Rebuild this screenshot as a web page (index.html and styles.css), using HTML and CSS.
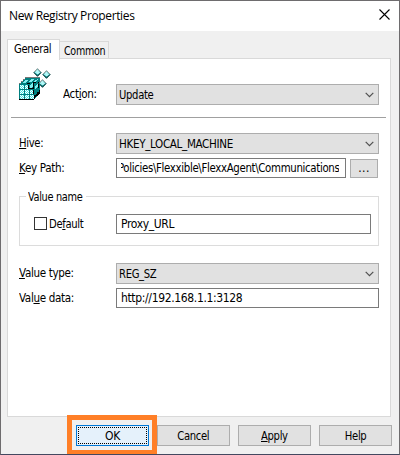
FILE: index.html
```
<!DOCTYPE html>
<html lang="en">
<head>
<meta charset="utf-8">
<title>New Registry Properties</title>
<link rel="stylesheet" href="styles.css">
</head>
<body>
<div class="window">
  <header class="titlebar">
    <span class="title">New Registry Properties</span>
    <svg class="close" width="11" height="11" viewBox="0 0 11 11"><path d="M.5 .5l10 10M10.5 .5l-10 10"/></svg>
  </header>
  <nav class="tabs">
    <div class="tab active"><span class="t narrow">General</span></div>
    <div class="tab"><span class="t narrowest">Common</span></div>
  </nav>
  <main class="panel">
    <div class="row action">
      <svg class="icon" width="34" height="34" viewBox="0 0 34 34">
        <defs>
          <pattern id="d" width="2" height="2" patternUnits="userSpaceOnUse"><path fill="#48e6e6" d="M0 0h2v2H0z"/><path fill="#fff" d="M0 0h1v1H0zM1 1h1v1H1z"/></pattern>
          <g id="gem"><path fill="#008080" d="M0-4L4 0 0 4-4 0z"/><path fill="#9ff4f4" d="M0-3.4L3 0 0 2-3 0z"/><path fill="#fff" d="M-1-2h1v1h-1zM0 0h1v1H0z"/><path fill="none" stroke="#999" d="M-3.6 0L0-3.8 3.6 0"/><path fill="none" stroke="#1c3c3c" d="M-3.6 0L0 3.8 3.6 0"/></g>
        </defs>
        <g shape-rendering="crispEdges">
        <path fill="#008080" d="M1 17L7 11H22V26L16 33H1z"/>
        <path fill="url(#d)" d="M2 18h4v4H2zM2 23h4v4H2zM7 23h4v4H7zM2 28h4v4H2zM7 28h4v4H7zM12 28h4v4h-4zM7 18h3v4H7zM12 23h3v4h-3z"/>
        <path fill="#7fefef" d="M4 16l3-3h3l-3 3zM11 14l3-2h2l-2 3h-3zM17 13l3-1-2 3h-2zM12 18l3-2v4l-3 1zM17 19l3-3v4l-3 2z"/>
        <path fill="#000" d="M10 18h1v4h-1zM11 21h5v1h-5zM15 23h1v4h-1zM16 28l6-6v4l-6 7H1v-1h15zM15 16h1v5h-1zM20 15h1v6h-1zM9 16h3v1H9zM15 15h3v1h-3z"/>
        <path fill="#008080" d="M17 25l2-2v3l-2 2zM20 22l1-1v3l-1 1zM17 30l2-2v1l-2 2z"/>
        <path fill="#777" d="M7 10h15v1H7zM5 12h2v1H5zM3 14h2v1H3zM1 16h2v1H1z"/>
        </g>
        <use href="#gem" x="19.5" y="5.5"/><use href="#gem" x="28.5" y="7.5"/><use href="#gem" x="24.5" y="16.5"/>
      </svg>
      <label class="label l-action"><span class="t slim">Act<u>i</u>on:</span></label>
      <div class="select"><span class="t narrow">Update</span><svg class="chev" width="9" height="6" viewBox="0 0 9 6"><path d="M.7 .8l3.8 3.8L8.3 .8"/></svg></div>
    </div>
    <div class="rule"></div>
    <div class="row hive">
      <label class="label"><span class="t narrow"><u>H</u>ive:</span></label>
      <div class="select"><span class="t slim">HKEY_LOCAL_MACHINE</span><svg class="chev" width="9" height="6" viewBox="0 0 9 6"><path d="M.7 .8l3.8 3.8L8.3 .8"/></svg></div>
    </div>
    <div class="row path">
      <label class="label"><span class="t slim"><u>K</u>ey Path:</span></label>
      <div class="input"><div class="clip"><span class="t path-text">Policies\Flexxible\FlexxAgent\Communications</span></div></div>
      <div class="browse">...</div>
    </div>
    <section class="group">
      <div class="legend"><span class="t narrower">Value name</span></div>
      <div class="check"></div>
      <label class="default"><span class="t narrow">De<u>f</u>ault</span></label>
      <div class="input"><span>Proxy_URL</span></div>
    </section>
    <div class="row type">
      <label class="label"><span class="t slim"><u>V</u>alue type:</span></label>
      <div class="select"><span class="t narrow">REG_SZ</span><svg class="chev" width="9" height="6" viewBox="0 0 9 6"><path d="M.7 .8l3.8 3.8L8.3 .8"/></svg></div>
    </div>
    <div class="row data">
      <label class="label"><span class="t slim">Val<u>u</u>e data:</span></label>
      <div class="input"><span>http://192.168.1.1:3128</span></div>
    </div>
  </main>
  <footer class="buttons">
    <div class="button ok"><span>OK</span></div>
    <div class="button"><span>Cancel</span></div>
    <div class="button"><span><u>A</u>pply</span></div>
    <div class="button"><span>Help</span></div>
    <div class="highlight"></div>
  </footer>
</div>
</body>
</html>
```
FILE: styles.css
```
* { box-sizing: border-box; }
body { margin: 0; font: 12px/14px "DejaVu Sans Condensed", "DejaVu Sans", sans-serif; font-stretch: condensed; letter-spacing: -0.35px; color: #000; }
u { text-decoration-thickness: 1px; text-underline-offset: 1px; text-decoration-skip-ink: none; }
.t { display: inline-block; transform-origin: 0 50%; }
.slim { transform: scaleX(.962); }
.narrow { transform: scaleX(.93); }
.narrower { transform: scaleX(.905); }
.narrowest { transform: scaleX(.885); }
.window { width: 400px; height: 455px; border: 1px solid #6e6c6e; border-bottom-color: #434860; background: #f0f0f0; overflow: hidden; white-space: nowrap; }
.titlebar { height: 30px; background: #fff; display: flex; justify-content: space-between; padding: 7px 9px 0 8px; }
.title { font: 12px/16px "Open Sans", sans-serif; letter-spacing: -0.37px; }
.close { margin-top: 1px; fill: none; stroke: #000; stroke-width: 1.1; }
.tabs { height: 28px; padding: 7px 0 0 6px; display: flex; align-items: flex-end; position: relative; z-index: 1; }
.tab { width: 49px; height: 18px; border: 1px solid #d9d9d9; border-left: 0; border-bottom: 0; padding: 2px 0 0 4px; }
.tab.active { width: 53px; height: 21px; border-left: 1px solid #d9d9d9; background: #fff; padding: 2px 0 0 6px; margin-bottom: -1px; }
.panel { width: 384px; height: 359px; margin: -1px 0 0 6px; border: 1px solid #d9d9d9; background: #fff; padding: 25px 11px 0; }
.row { display: flex; align-items: flex-start; }
.label { width: 97px; padding-top: 3px; flex: none; }
.select, .input { flex: 1; display: flex; align-items: center; }
.select { height: 21px; border: 1px solid #adadad; background: #e1e1e1; padding: 1px 4px 0 2px; justify-content: space-between; }
.input { height: 20px; border: 1px solid #7a7a7a; background: #fff; padding-left: 4px; }
.chev { fill: none; stroke: #505050; stroke-width: 1.2; }
.icon { margin-top: -17px; margin-left: -1px; flex: none; }
.action { height: 33px; }
.l-action { width: 53px; margin-left: 11px; }
.rule { height: 1px; background: #a0a0a0; margin: 0 -7px 0 -8px; }
.hive { margin-top: 15px; }
.path { margin-top: 4px; }
.path .input { flex: none; width: 230px; }
.clip { overflow: hidden; width: 218px; display: flex; justify-content: flex-end; }
.clip .t { flex: none; transform-origin: 100% 50%; }
.path-text { transform: scaleX(.945); }
.browse { width: 28px; height: 19px; margin: 1px 0 0 4px; border: 1px solid #adadad; background: #e1e1e1; text-align: center; letter-spacing: .4px; line-height: 17px; }
.group { position: relative; height: 50px; margin-top: 18px; border: 1px solid #dcdcdc; display: flex; align-items: flex-start; padding: 17px 7px 0 14px; }
.legend { position: absolute; left: 6px; top: -7px; width: 60px; padding-left: 2px; background: #fff; }
.check { width: 13px; height: 13px; margin-top: 3px; border: 1px solid #333; }
.default { width: 69px; padding: 3px 0 0 2px; }
.type { margin-top: 17px; }
.data { margin-top: 4px; }
.buttons { position: relative; display: flex; gap: 8px; padding: 8px 0 0 75px; }
.button { width: 73px; height: 21px; border: 1px solid #adadad; background: #e1e1e1; display: flex; align-items: center; justify-content: center; }
.button span { transform: scaleX(.93); }
.button.ok { border-color: #0078d7; background: #e5f1fb; }
.button.ok span { transform: none; width: 69px; height: 17px; flex: none; border: 1px dotted #000; text-align: center; line-height: 16px; }
.highlight { position: absolute; left: 66px; top: -2px; width: 90px; height: 40px; border: 5px solid #ff7f27; }
```
